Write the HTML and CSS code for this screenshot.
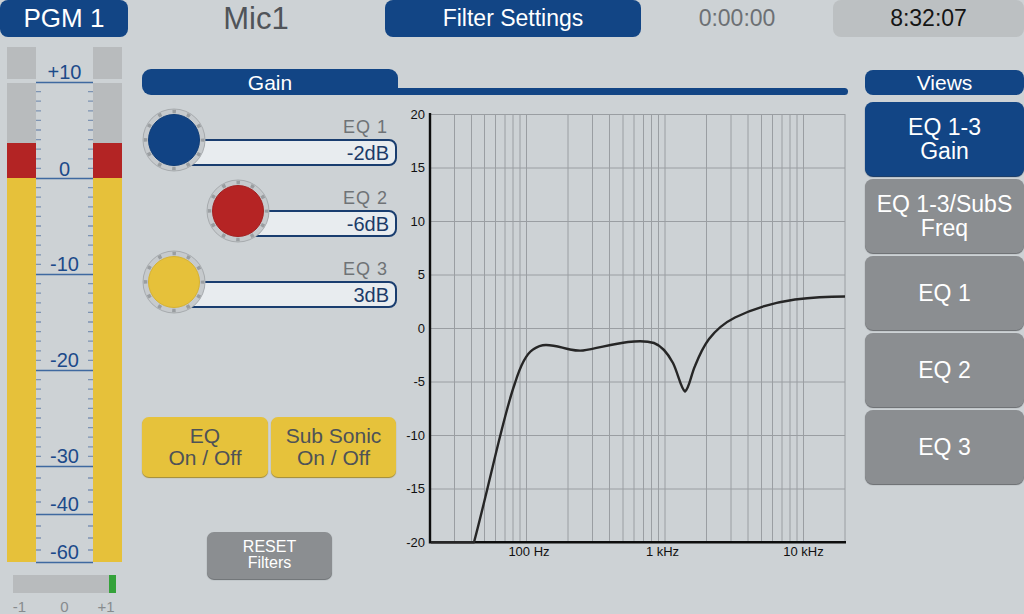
FILE: index.html
```html
<!DOCTYPE html>
<html lang="en">
<head>
<meta charset="utf-8">
<title>Filter Settings</title>
<link rel="stylesheet" href="styles.css">
</head>
<body>
<div class="app">
  <header class="topbar">
    <div class="pgm">PGM 1</div>
    <div class="channel">Mic1</div>
    <div class="page-title">Filter Settings</div>
    <div class="timer">0:00:00</div>
    <div class="clock">8:32:07</div>
  </header>

  <main class="main">
    <aside class="meter-col">
      <svg class="meter" width="130" height="577" viewBox="0 37 130 577">
        <g class="bar">
          <rect class="m-off" x="7" y="47" width="29" height="32"/>
          <rect class="m-off" x="7" y="83" width="29" height="60"/>
          <rect class="m-red" x="7" y="143" width="29" height="35"/>
          <rect class="m-yel" x="7" y="178" width="29" height="384"/>
          <rect class="m-off" x="93" y="47" width="29" height="32"/>
          <rect class="m-off" x="93" y="83" width="29" height="60"/>
          <rect class="m-red" x="93" y="143" width="29" height="35"/>
          <rect class="m-yel" x="93" y="178" width="29" height="384"/>
        </g>
        <path class="m-major" d="M36 82.5H93M36 178.5H93M36 274.5H93M36 370.5H93M36 466.5H93M36 514.5H93M36 562.5H93"/>
        <path class="m-tick" d="M36 91.6h5M88 91.6h5M36 101.2h5M88 101.2h5M36 110.8h5M88 110.8h5M36 120.4h5M88 120.4h5M36 130h5M88 130h5M36 139.6h5M88 139.6h5M36 149.2h5M88 149.2h5M36 158.8h5M88 158.8h5M36 168.4h5M88 168.4h5
        M36 187.6h5M88 187.6h5M36 197.2h5M88 197.2h5M36 206.8h5M88 206.8h5M36 216.4h5M88 216.4h5M36 226h5M88 226h5M36 235.6h5M88 235.6h5M36 245.2h5M88 245.2h5M36 254.8h5M88 254.8h5M36 264.4h5M88 264.4h5
        M36 283.6h5M88 283.6h5M36 293.2h5M88 293.2h5M36 302.8h5M88 302.8h5M36 312.4h5M88 312.4h5M36 322h5M88 322h5M36 331.6h5M88 331.6h5M36 341.2h5M88 341.2h5M36 350.8h5M88 350.8h5M36 360.4h5M88 360.4h5
        M36 379.6h5M88 379.6h5M36 389.2h5M88 389.2h5M36 398.8h5M88 398.8h5M36 408.4h5M88 408.4h5M36 418h5M88 418h5M36 427.6h5M88 427.6h5M36 437.2h5M88 437.2h5M36 446.8h5M88 446.8h5M36 456.4h5M88 456.4h5
        M36 478h5M88 478h5M36 490h5M88 490h5M36 502h5M88 502h5
        M36 526h5M88 526h5M36 538h5M88 538h5M36 550h5M88 550h5"/>
        <g class="m-label">
          <text x="64.5" y="79">+10</text>
          <text x="64.5" y="175.5">0</text>
          <text x="64.5" y="271">-10</text>
          <text x="64.5" y="367">-20</text>
          <text x="64.5" y="463">-30</text>
          <text x="64.5" y="511">-40</text>
          <text x="64.5" y="559">-60</text>
        </g>
        <rect class="m-off" x="13" y="575" width="103" height="18"/>
        <rect class="m-green" x="109" y="575" width="7" height="18"/>
        <g class="bal-label">
          <text x="19.5" y="611.5">-1</text>
          <text x="64.5" y="611.5">0</text>
          <text x="106" y="611.5">+1</text>
        </g>
      </svg>
    </aside>

    <section class="center">
      <div class="section-head">
        <div class="section-tab">Gain</div>
        <div class="section-rule"></div>
      </div>

      <div class="content">
        <div class="controls">
          <div class="eq-list">
            <div class="eq-row">
              <svg class="knob" width="64" height="64" viewBox="0 0 64 64">
                <circle class="knob-ring" cx="32" cy="32" r="31"/>
                <circle class="knob-dots" cx="32" cy="32" r="28.5"/>
                <circle class="knob-cap knob-cap--blue" cx="32" cy="32" r="25.5"/>
              </svg>
              <div class="eq-info">
                <div class="eq-label">EQ 1</div>
                <div class="eq-value">-2dB</div>
              </div>
            </div>
            <div class="eq-row eq-row--indent">
              <svg class="knob" width="64" height="64" viewBox="0 0 64 64">
                <circle class="knob-ring" cx="32" cy="32" r="31"/>
                <circle class="knob-dots" cx="32" cy="32" r="28.5"/>
                <circle class="knob-cap knob-cap--red" cx="32" cy="32" r="25.5"/>
              </svg>
              <div class="eq-info">
                <div class="eq-label">EQ 2</div>
                <div class="eq-value">-6dB</div>
              </div>
            </div>
            <div class="eq-row">
              <svg class="knob" width="64" height="64" viewBox="0 0 64 64">
                <circle class="knob-ring" cx="32" cy="32" r="31"/>
                <circle class="knob-dots" cx="32" cy="32" r="28.5"/>
                <circle class="knob-cap knob-cap--yellow" cx="32" cy="32" r="25.5"/>
              </svg>
              <div class="eq-info">
                <div class="eq-label">EQ 3</div>
                <div class="eq-value">3dB</div>
              </div>
            </div>
          </div>

          <div class="toggles">
            <div class="btn btn--yellow">EQ<br>On / Off</div>
            <div class="btn btn--yellow">Sub Sonic<br>On / Off</div>
          </div>

          <div class="btn btn--reset">RESET<br>Filters</div>
        </div>

        <svg class="graph" width="453" height="460" viewBox="397 100 453 460">
          <path class="g-grid" d="M454.5 114V542M471.5 114V542M484.5 114V542M495.5 114V542M505 114V542M513 114V542M520 114V542M526.5 114V542
          M568 114V542M592.5 114V542M609.5 114V542M623 114V542M634 114V542M643.5 114V542M651.5 114V542M658.5 114V542M665 114V542
          M706.5 114V542M731 114V542M748 114V542M761.5 114V542M772.5 114V542M782 114V542M790 114V542M797 114V542M803.5 114V542M845 114V542
          M430 114.5H845M430 168H845M430 221.5H845M430 275H845M430 328.5H845M430 382H845M430 435.5H845M430 489H845"/>
          <path class="g-axis" d="M430 113V543.5M429 542.2H846"/>
          <path class="g-curve" d="M431 542.2H474
            C480 520 489 482 495 457
            C502 428 509 400 515 383
            C520 367 526 354 533 349.5
            C538 346 542 345 546 345
            C556 345 562 348 570 349.5
            C575 350.5 579 351 583 350.5
            C597 348.5 612 344 628 342
            C637 341 646 340.5 654 343
            C661 345.5 667 352 673 363
            C678 373 681 389 685 391.5
            C689 389 691 375 695 366
            C699 356 703 347 709 339
            C716 330 724 323 735 317.5
            C750 310 770 303 795 299.5
            C815 297 830 296.5 845 296.5"/>
          <g class="g-ylabel">
            <text x="425" y="118.5">20</text>
            <text x="425" y="172">15</text>
            <text x="425" y="225.5">10</text>
            <text x="425" y="279">5</text>
            <text x="425" y="332.5">0</text>
            <text x="425" y="386">-5</text>
            <text x="425" y="439.5">-10</text>
            <text x="425" y="493">-15</text>
            <text x="425" y="546.5">-20</text>
          </g>
          <g class="g-xlabel">
            <text x="529" y="555.5">100 Hz</text>
            <text x="662.5" y="555.5">1 kHz</text>
            <text x="803.5" y="555.5">10 kHz</text>
          </g>
        </svg>
      </div>
    </section>

    <nav class="views">
      <div class="views-head">Views</div>
      <div class="view-list">
        <div class="view-btn view-btn--active">EQ 1-3<br>Gain</div>
        <div class="view-btn">EQ 1-3/SubS<br>Freq</div>
        <div class="view-btn">EQ 1</div>
        <div class="view-btn">EQ 2</div>
        <div class="view-btn">EQ 3</div>
      </div>
    </nav>
  </main>
</div>
</body>
</html>
```

FILE: styles.css
```css
* { box-sizing: border-box; }

html, body {
  margin: 0;
  padding: 0;
}

body {
  background: #cdd2d5;
  font-family: "Liberation Sans", Arial, Helvetica, sans-serif;
  color: #222;
  overflow: hidden;
}

.app {
  width: 1024px;
  height: 614px;
  display: grid;
  grid-template-rows: 37px 1fr;
}

/* ---------- top bar ---------- */
.topbar {
  display: flex;
  align-items: stretch;
  height: 37px;
}

.pgm {
  width: 128px;
  background: #124585;
  color: #fff;
  border-radius: 8px;
  font-size: 26px;
  line-height: 37px;
  text-align: center;
}

.channel {
  width: 256px;
  text-align: center;
  color: #505459;
  font-size: 31px;
  line-height: 37px;
}

.page-title {
  width: 256px;
  margin-left: 1px;
  background: #124585;
  color: #fff;
  border-radius: 8px;
  font-size: 23px;
  line-height: 37px;
  text-align: center;
}

.timer {
  width: 192px;
  text-align: center;
  color: #6c7074;
  font-size: 23px;
  line-height: 37px;
}

.clock {
  flex: 1;
  background: #bcc0c2;
  border-radius: 8px;
  color: #151515;
  font-size: 23px;
  line-height: 37px;
  text-align: center;
}

/* ---------- main ---------- */
.main {
  display: grid;
  grid-template-columns: 130px 735px 159px;
}

.meter-col {
  display: block;
}

.meter {
  display: block;
}

.m-off { fill: #b8bbbd; }
.m-red { fill: #b32424; }
.m-yel { fill: #e6c13a; }
.m-green { fill: #34a23a; }

.m-major {
  stroke: #3f69a0;
  stroke-width: 1.3;
  fill: none;
}

.m-tick {
  stroke: #7d93b2;
  stroke-width: 1.3;
  fill: none;
}

.m-label text {
  fill: #1c4a8a;
  font-size: 20px;
  text-anchor: middle;
  font-family: "Liberation Sans", Arial, sans-serif;
}

.bal-label text {
  fill: #878b8e;
  font-size: 15px;
  text-anchor: middle;
  font-family: "Liberation Sans", Arial, sans-serif;
}

/* ---------- center ---------- */
.center {
  padding: 32px 0 0 12px;
  display: flex;
  flex-direction: column;
}

.section-head {
  display: flex;
  align-items: flex-end;
  width: 706px;
  height: 26px;
}

.section-tab {
  width: 256px;
  height: 26px;
  background: #124585;
  color: #fff;
  border-radius: 9px 9px 0 9px;
  font-size: 21px;
  line-height: 27px;
  text-align: center;
}

.section-rule {
  flex: 1;
  height: 7px;
  background: #124585;
  border-radius: 0 4px 4px 0;
}

.content {
  display: flex;
  margin-top: 5px;
}

.controls {
  width: 255px;
  display: flex;
  flex-direction: column;
}

.eq-list {
  padding-top: 8px;
  display: flex;
  flex-direction: column;
  gap: 8px;
}

.eq-row {
  display: flex;
  height: 63px;
}

.eq-row--indent {
  padding-left: 64px;
}

.knob {
  display: block;
  flex: none;
  position: relative;
  z-index: 1;
}

.knob-ring {
  fill: #c6cacd;
  stroke: #a7abae;
  stroke-width: 1;
}

.knob-dots {
  fill: none;
  stroke: #9a9ea1;
  stroke-width: 3.5;
  stroke-dasharray: 3.5 11.423;
  stroke-dashoffset: 1.75;
}

.knob-cap { stroke-width: 1; }
.knob-cap--blue { fill: #114384; stroke: #0f3d78; }
.knob-cap--red { fill: #b52424; stroke: #a32020; }
.knob-cap--yellow { fill: #e6c13a; stroke: #d6b232; }

.eq-info {
  flex: 1;
  margin-left: -31px;
  padding-top: 9px;
}

.eq-label {
  text-align: right;
  padding-right: 9px;
  font-size: 18px;
  line-height: 20px;
  height: 22px;
  letter-spacing: 1px;
  color: #6f7376;
}

.eq-value {
  height: 27px;
  border: 2px solid #193d6f;
  border-radius: 0 8px 8px 0;
  background: #e8ecef;
  color: #1b3a68;
  font-size: 20px;
  line-height: 24px;
  text-align: right;
  padding-right: 6px;
}

.toggles {
  margin-top: 104px;
  display: flex;
  gap: 3px;
  height: 60px;
}

.btn {
  border-radius: 7px;
  text-align: center;
}

.btn--yellow {
  width: 126px;
  height: 60px;
  background: #e6c23b;
  color: #4e5257;
  font-size: 21px;
  line-height: 22px;
  padding-top: 8px;
  box-shadow: 0 1px 1px #a38a2e;
}

.btn--yellow + .btn--yellow {
  width: 125px;
}

.btn--reset {
  align-self: center;
  margin-top: 55px;
  width: 125px;
  height: 47px;
  background: #8b8e91;
  color: #fff;
  font-size: 16px;
  line-height: 16px;
  padding-top: 7px;
  box-shadow: 0 1px 1px #6a6d70;
}

.graph {
  display: block;
  flex: none;
}

.g-grid {
  stroke: #9a9ea2;
  stroke-width: 1;
  fill: none;
}

.g-axis {
  stroke: #0d0d0d;
  stroke-width: 2.4;
  fill: none;
}

.g-curve {
  stroke: #262626;
  stroke-width: 2.4;
  fill: none;
  stroke-linejoin: round;
}

.g-ylabel text {
  font-size: 13px;
  fill: #111;
  text-anchor: end;
  font-family: "Liberation Sans", Arial, sans-serif;
}

.g-xlabel text {
  font-size: 13px;
  fill: #111;
  text-anchor: middle;
  font-family: "Liberation Sans", Arial, sans-serif;
}

/* ---------- views ---------- */
.views {
  padding-top: 33px;
  display: flex;
  flex-direction: column;
}

.views-head {
  height: 25px;
  background: #124585;
  color: #fff;
  border-radius: 8px;
  font-size: 21px;
  line-height: 26px;
  text-align: center;
}

.view-list {
  margin-top: 7px;
  display: flex;
  flex-direction: column;
  gap: 3px;
}

.view-btn {
  height: 74px;
  background: #8b8e91;
  color: #fff;
  border-radius: 8px;
  font-size: 23px;
  line-height: 24px;
  display: flex;
  align-items: center;
  justify-content: center;
  text-align: center;
  box-shadow: 0 1px 1px #66696c;
}

.view-btn--active {
  background: #124585;
  box-shadow: 0 1px 1px #0b2f5e;
}
```
